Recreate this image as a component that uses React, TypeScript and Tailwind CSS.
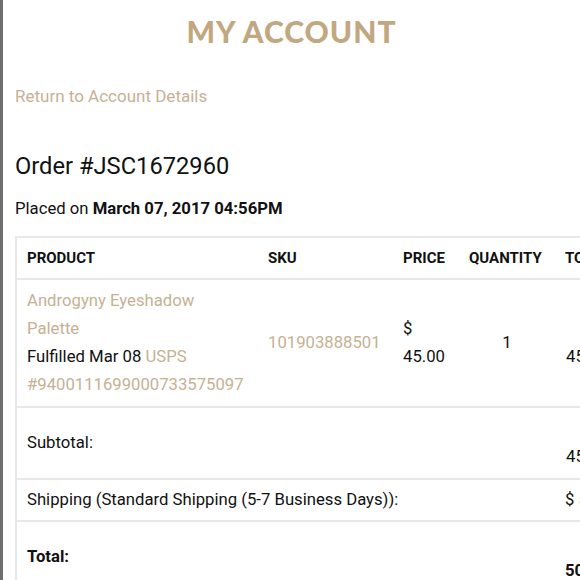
import React from 'react';

const tan = 'text-[#c2a881]';
const link = 'text-[#c6b193]';

const App: React.FC = () => {
  return (
    <div className="w-[580px] h-[580px] overflow-hidden bg-white border-l-[3px] border-[#6e6e6e] font-['Roboto',sans-serif] text-[#111]">
      <div className="pt-[12px]">
        <h1 className={`text-center font-['Lato',sans-serif] font-black text-[30px] leading-[38px] tracking-[1px] ${tan}`}>
          MY ACCOUNT
        </h1>
        <a className={`block ml-[12px] mt-[34px] text-[17px] leading-[24px] ${link}`}>Return to Account Details</a>
        <h2 className="ml-[12px] mt-[43px] text-[23.7px] leading-[30px]">Order #JSC1672960</h2>
        <p className="ml-[12px] mt-[16px] text-[16.7px] leading-[24px]">
          Placed on <span className="font-bold">March 07, 2017 04:56PM</span>
        </p>

        <table className="ml-[12px] mt-[15px] w-[605px] border-collapse border-2 border-[#e6e8eb] text-[16.7px] leading-[28px] table-fixed">
          <colgroup>
            <col className="w-[242px]" />
            <col className="w-[135px]" />
            <col className="w-[66px]" />
            <col className="w-[96px]" />
            <col className="w-[64px]" />
          </colgroup>
          <thead>
            <tr className="border-b-2 border-[#e6e8eb] text-[15px] font-bold text-left">
              <th className="px-[10px] py-[6px]">PRODUCT</th>
              <th className="px-[10px] py-[6px]">SKU</th>
              <th className="px-[10px] py-[6px]">PRICE</th>
              <th className="px-[10px] py-[6px]">QUANTITY</th>
              <th className="px-[10px] py-[6px] whitespace-nowrap">TOTAL</th>
            </tr>
          </thead>
          <tbody>
            <tr className="border-b-2 border-[#e6e8eb] align-middle">
              <td className="px-[10px] py-[7px]">
                <div className={`max-w-[205px] ${link}`}>Androgyny Eyeshadow Palette</div>
                <div>
                  Fulfilled Mar 08 <span className={link}>USPS #9400111699000733575097</span>
                </div>
              </td>
              <td className={`px-[10px] py-[7px] ${link}`}>101903888501</td>
              <td className="px-[10px] py-[7px]">$ 45.00</td>
              <td className="px-[10px] py-[7px] text-center">1</td>
              <td className="px-[10px] py-[7px] text-right">$ 45.00</td>
            </tr>
            <tr className="border-b-2 border-[#e6e8eb]">
              <td colSpan={4} className="px-[10px] py-[7px]">Subtotal:</td>
              <td className="px-[10px] py-[7px] text-right">$ 45.00</td>
            </tr>
            <tr className="border-b-2 border-[#e6e8eb]">
              <td colSpan={4} className="px-[10px] py-[6px]">Shipping (Standard Shipping (5-7 Business Days)):</td>
              <td className="px-[10px] py-[6px] whitespace-nowrap">$ 5.95</td>
            </tr>
            <tr className="font-bold">
              <td colSpan={4} className="px-[10px] py-[7px]">Total:</td>
              <td className="px-[10px] py-[7px] text-right">$ 50.95</td>
            </tr>
          </tbody>
        </table>
      </div>
    </div>
  );
};

export default App;
